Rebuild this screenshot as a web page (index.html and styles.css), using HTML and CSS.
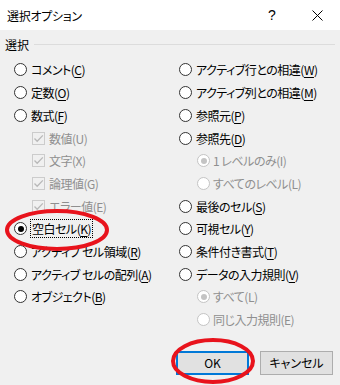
FILE: index.html
```html
<!DOCTYPE html>
<html lang="ja">
<head>
  <meta charset="UTF-8">
  <title>選択オプション</title>
  <link rel="stylesheet" href="styles.css">
</head>
<body>

<div class="dialog">
  <div class="titlebar">
    <span class="title">選択オプション</span>
    <span class="tb-btn help">?</span>
    <span class="tb-btn close">
      <svg width="11" height="11" viewBox="0 0 11 11"><path d="M0.5 0.5L10.5 10.5M10.5 0.5L0.5 10.5" stroke="#000" stroke-width="1"/></svg>
    </span>
  </div>

  <div class="content">
    <div class="legend"><span>選択</span><div class="legend-line"></div></div>

    <div class="options">
      <!-- 左の列 -->
      <div class="col">
        <div class="opt"><span class="radio"></span>コメント(<u>C</u>)</div>
        <div class="opt"><span class="radio"></span>定数(<u>O</u>)</div>
        <div class="opt"><span class="radio"></span>数式(<u>F</u>)</div>
        <div class="opt sub off"><span class="check"><svg width="11" height="11" viewBox="0 0 11 11"><path d="M1.5 5.5L4.2 8.3L9.8 2.4" fill="none" stroke="#b8b8b8" stroke-width="1.3"/></svg></span>数値(U)</div>
        <div class="opt sub off"><span class="check"><svg width="11" height="11" viewBox="0 0 11 11"><path d="M1.5 5.5L4.2 8.3L9.8 2.4" fill="none" stroke="#b8b8b8" stroke-width="1.3"/></svg></span>文字(X)</div>
        <div class="opt sub off"><span class="check"><svg width="11" height="11" viewBox="0 0 11 11"><path d="M1.5 5.5L4.2 8.3L9.8 2.4" fill="none" stroke="#b8b8b8" stroke-width="1.3"/></svg></span>論理値(G)</div>
        <div class="opt sub off"><span class="check"><svg width="11" height="11" viewBox="0 0 11 11"><path d="M1.5 5.5L4.2 8.3L9.8 2.4" fill="none" stroke="#b8b8b8" stroke-width="1.3"/></svg></span>エラー値(E)</div>
        <div class="opt"><span class="radio on"></span><span class="focus">空白セル(<u>K</u>)</span></div>
        <div class="opt"><span class="radio"></span>アクティブ セル領域(<u>R</u>)</div>
        <div class="opt"><span class="radio"></span>アクティブ セルの配列(<u>A</u>)</div>
        <div class="opt"><span class="radio"></span>オブジェクト(<u>B</u>)</div>
      </div>

      <!-- 右の列 -->
      <div class="col">
        <div class="opt"><span class="radio"></span>アクティブ行との相違(<u>W</u>)</div>
        <div class="opt"><span class="radio"></span>アクティブ列との相違(<u>M</u>)</div>
        <div class="opt"><span class="radio"></span>参照元(<u>P</u>)</div>
        <div class="opt"><span class="radio"></span>参照先(<u>D</u>)</div>
        <div class="opt sub off"><span class="radio on"></span>1 レベルのみ(I)</div>
        <div class="opt sub off"><span class="radio"></span>すべてのレベル(L)</div>
        <div class="opt"><span class="radio"></span>最後のセル(<u>S</u>)</div>
        <div class="opt"><span class="radio"></span>可視セル(<u>Y</u>)</div>
        <div class="opt"><span class="radio"></span>条件付き書式(<u>T</u>)</div>
        <div class="opt"><span class="radio"></span>データの入力規則(<u>V</u>)</div>
        <div class="opt sub off"><span class="radio on"></span>すべて(L)</div>
        <div class="opt sub off"><span class="radio"></span>同じ入力規則(E)</div>
      </div>
    </div>

    <div class="buttons">
      <button class="btn primary">OK</button>
      <button class="btn">キャンセル</button>
    </div>
  </div>

  <!-- 赤い丸の注釈 -->
  <svg class="marks" width="340" height="385" viewBox="0 0 340 385">
    <ellipse cx="57" cy="230" rx="50" ry="19" fill="none" stroke="#e8131c" stroke-width="4"/>
    <ellipse cx="213" cy="361" rx="40" ry="21" fill="none" stroke="#e8131c" stroke-width="4"/>
  </svg>
</div>

</body>
</html>
```

FILE: styles.css
```css
body {
  margin: 0;
  background: #f0f0f0;
  font-family: "Noto Sans CJK JP", "Noto Sans", sans-serif;
  font-size: 12px;
  font-feature-settings: "palt";
  color: #000;
}

.dialog {
  position: relative;
  width: 340px;
  height: 385px;
  overflow: hidden;
  background: #f0f0f0;
}

.titlebar {
  display: flex;
  align-items: center;
  height: 30px;
  background: #fff;
  padding-left: 7px;
}

.title {
  flex: 1;
  font-size: 12px;
  letter-spacing: -0.3px;
}

.tb-btn {
  display: flex;
  justify-content: center;
  align-items: center;
  width: 46px;
  height: 30px;
  font-family: "Liberation Sans", sans-serif;
  font-size: 14px;
}

.close {
  width: 45px;
}

.content {
  padding: 0 5px;
}

.legend {
  display: flex;
  align-items: center;
  height: 18px;
  margin-top: 5px;
}

.legend-line {
  flex: 1;
  height: 1px;
  background: #dcdcdc;
  margin-left: 5px;
}

.options {
  display: grid;
  grid-template-columns: 165px 165px;
  padding-left: 9px;
  margin-top: 5.6px;
}

.opt {
  display: flex;
  align-items: center;
  height: 22.7px;
  white-space: nowrap;
  letter-spacing: -0.5px;
}

.opt u {
  text-decoration-thickness: 1px;
  text-underline-offset: 2px;
}

.opt.sub {
  padding-left: 18px;
}

.opt.off {
  color: #8f8f8f;
}

.radio {
  position: relative;
  box-sizing: border-box;
  width: 13px;
  height: 13px;
  border: 1px solid #333;
  border-radius: 50%;
  background: #fff;
  margin-right: 4px;
  flex-shrink: 0;
}

.radio.on::after {
  content: "";
  position: absolute;
  left: 2.5px;
  top: 2.5px;
  width: 6px;
  height: 6px;
  border-radius: 50%;
  background: #000;
}

.off .radio {
  border-color: #c4c4c4;
  margin-right: 3px;
}

.off .radio.on::after {
  background: #c4c4c4;
}

.check {
  display: flex;
  justify-content: center;
  align-items: center;
  box-sizing: border-box;
  width: 13px;
  height: 13px;
  border: 1px solid #cccccc;
  background: #f0f0f0;
  margin-right: 4px;
}

.focus {
  outline: 1px dotted #000;
  padding: 0 1px;
  line-height: 17px;
}

.buttons {
  display: flex;
  justify-content: flex-end;
  gap: 11px;
  padding-right: 2px;
  margin-top: 20px;
}

.btn {
  box-sizing: border-box;
  width: 73px;
  height: 24px;
  border: 1px solid #adadad;
  background: #e1e1e1;
  font-family: inherit;
  font-size: 12px;
  font-feature-settings: "palt";
  color: #000;
  padding: 0;
}

.btn.primary {
  border: 2px solid #0078d7;
}

.marks {
  position: absolute;
  left: 0;
  top: 0;
  pointer-events: none;
}
```
